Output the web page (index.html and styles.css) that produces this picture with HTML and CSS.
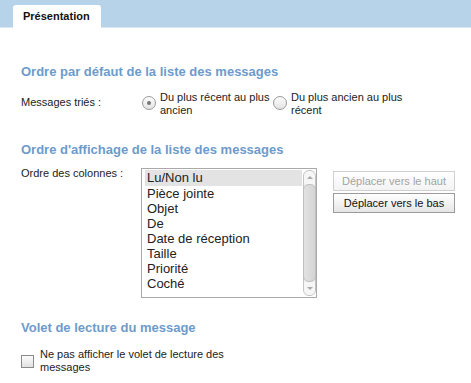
FILE: index.html
```html
<!DOCTYPE html>
<html lang="fr">
<head>
    <meta charset="UTF-8">
    <title>Préférences - Affichage des messages</title>
    <link rel="stylesheet" href="styles.css">
</head>
<body>
    <div class="tabbar">
        <div class="tab">Présentation</div>
    </div>

    <div class="content">
        <h2>Ordre par défaut de la liste des messages</h2>
        <div class="row">
            <div class="label">Messages triés :</div>
            <div class="field radios">
                <div class="choice">
                    <span class="radio checked"></span>
                    <span class="choice-text">Du plus récent au plus<br>ancien</span>
                </div>
                <div class="choice">
                    <span class="radio"></span>
                    <span class="choice-text">Du plus ancien au plus<br>récent</span>
                </div>
            </div>
        </div>

        <h2 class="tight">Ordre d'affichage de la liste des messages</h2>
        <div class="row">
            <div class="label">Ordre des colonnes :</div>
            <div class="field columns">
                <div class="listbox">
                    <ul class="items">
                        <li class="selected">Lu/Non lu</li>
                        <li>Pièce jointe</li>
                        <li>Objet</li>
                        <li>De</li>
                        <li>Date de réception</li>
                        <li>Taille</li>
                        <li>Priorité</li>
                        <li>Coché</li>
                    </ul>
                    <div class="scrollbar">
                        <span class="arrow up"></span>
                        <span class="thumb"></span>
                        <span class="arrow down"></span>
                    </div>
                </div>
                <div class="buttons">
                    <button disabled>Déplacer vers le haut</button>
                    <button>Déplacer vers le bas</button>
                </div>
            </div>
        </div>

        <h2 class="last">Volet de lecture du message</h2>
        <div class="check-row">
            <span class="checkbox"></span>
            <span class="check-text">Ne pas afficher le volet de lecture des<br>messages</span>
        </div>
    </div>
</body>
</html>
```

FILE: styles.css
```css
body {
    margin: 0;
    font-family: "Liberation Sans", Arial, sans-serif;
    font-size: 11px;
    color: #222;
    background: #fff;
}
.tabbar {
    height: 27px;
    background: #b7d3ea;
    border-bottom: 1px solid #dce9f5;
    padding-left: 13px;
    display: flex;
    align-items: flex-end;
}
.tab {
    background: #fff;
    height: 23px;
    margin-bottom: -1px;
    width: 88px;
    box-sizing: border-box;
    padding: 4px 0 0 10px;
    border-radius: 3px 3px 0 0;
    font-weight: bold;
    font-size: 11px;
    line-height: 15px;
    color: #111;
}
.content {
    padding: 36px 0 0 21px;
}
h2 {
    margin: 0 0 13px 0;
    font-size: 13px;
    line-height: 16px;
    font-weight: bold;
    color: #6d9bcb;
}
h2.tight {
    margin-bottom: 6px;
}
.row {
    display: flex;
    margin-bottom: 25px;
}
.tight + .row {
    margin-bottom: 22px;
}
.label {
    width: 120px;
    flex-shrink: 0;
    line-height: 14px;
    padding-top: 2px;
}
.radios {
    display: flex;
    margin-top: -2px;
}
.choice {
    display: flex;
    width: 131px;
    white-space: nowrap;
}
.choice + .choice {
    width: 130px;
}
.radio {
    width: 12px;
    height: 12px;
    margin: 5px 4px 0 1px;
    flex-shrink: 0;
    border: 1px solid #9a9a9a;
    border-radius: 50%;
    background: linear-gradient(#fdfdfd, #e3e3e3);
    position: relative;
}
.radio.checked::after {
    content: "";
    position: absolute;
    left: 4px;
    top: 4px;
    width: 4px;
    height: 4px;
    border-radius: 50%;
    background: #777;
}
.choice-text {
    line-height: 13px;
}
.columns {
    display: flex;
}
.listbox {
    width: 171px;
    height: 126px;
    margin-top: 4px;
    border: 1px solid #a9a9a9;
    display: flex;
    padding: 1px 0 1px 3px;
}
.items {
    list-style: none;
    margin: 0;
    padding: 0;
    flex: 1;
    font-size: 13px;
}
.items li {
    height: 15px;
    line-height: 15px;
    padding-left: 2px;
}
.items li.selected {
    background: #e3e3e3;
    height: 16px;
    line-height: 16px;
}
.scrollbar {
    width: 13px;
    margin-left: 1px;
    display: flex;
    flex-direction: column;
    border: 1px solid #c4c4c4;
    border-radius: 6px;
    background: #ececec;
    box-sizing: border-box;
}
.arrow {
    height: 13px;
    background: #f6f6f6;
    border-radius: 6px 6px 0 0;
    position: relative;
}
.arrow.down {
    border-radius: 0 0 6px 6px;
}
.arrow::after {
    content: "";
    position: absolute;
    left: 3px;
    border-left: 3px solid transparent;
    border-right: 3px solid transparent;
}
.arrow.up::after {
    top: 5px;
    border-bottom: 3px solid #aaa;
}
.arrow.down::after {
    top: 5px;
    border-top: 3px solid #aaa;
}
.thumb {
    flex: 1;
    background: linear-gradient(to right, #e2e2e2, #d4d4d4);
    border: 1px solid #c0c0c0;
    border-radius: 6px;
    margin: 0 -1px;
}
.buttons {
    display: flex;
    flex-direction: column;
    gap: 2px;
    margin-left: 16px;
    margin-top: 7px;
}
button {
    width: 122px;
    height: 20px;
    font-family: "Liberation Sans", Arial, sans-serif;
    font-size: 11px;
    color: #111;
    padding: 0;
    border: 1px solid #9b9b9b;
    background: linear-gradient(#ffffff, #e6e6e6);
}
button:disabled {
    color: #a3a3a3;
    border-color: #d0d0d0;
    background: linear-gradient(#ffffff, #f3f3f3);
}
h2.last {
    margin-bottom: 12px;
}
.check-row {
    display: flex;
}
.checkbox {
    width: 11px;
    height: 11px;
    margin-top: 7px;
    margin-right: 6px;
    flex-shrink: 0;
    border: 1px solid #8a8a8a;
    background: linear-gradient(#fbfbfb, #e2e2e2);
}
.check-text {
    white-space: nowrap;
    line-height: 13px;
}
```
